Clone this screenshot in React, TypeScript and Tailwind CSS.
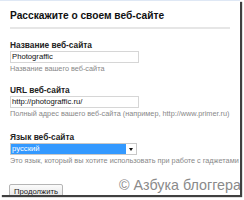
import React from 'react';

const font = { fontFamily: '"Liberation Sans", Arial, sans-serif' };

function Pole({ label, children, hint, className = '' }: { label: string; children: React.ReactNode; hint: string; className?: string }) {
  return (
    <div className={`flex flex-col ${className}`}>
      <div className="text-[8.3px] font-bold leading-[10px] text-[#222]">{label}</div>
      <div className="mt-[1px]">{children}</div>
      <div className="mt-[1px] whitespace-nowrap text-[7.3px] leading-[9px] text-[#888]">{hint}</div>
    </div>
  );
}

export default function App() {
  return (
    <div className="h-[200px] w-[244px] bg-white" style={font}>
      <div className="relative h-[195px] w-[240px] overflow-hidden border-t border-[#dfe8f5] bg-white shadow-[2px_2px_1px_rgba(0,0,0,0.75)]">
        <div className="px-[10px] pt-[8px]">
          <div className="text-[10.2px] font-bold leading-[13px] text-[#111]">Расскажите о своем веб-сайте</div>
          <div className="mt-[5px] h-[2px] bg-[#e6e6e6]" />
        </div>
        <div className="flex flex-col px-[10px] pt-[11px]">
          <Pole label="Название веб-сайта" hint="Название вашего веб-сайта">
            <div className="flex h-[12px] w-[129px] items-center border border-[#d6d6d6] px-[1px] text-[7.7px] text-[#111]">
              Photograffic
            </div>
          </Pole>
          <Pole className="mt-[12px]" label="URL веб-сайта" hint="Полный адрес вашего веб-сайта (например, http://www.primer.ru)">
            <div className="flex h-[12px] w-[129px] items-center border border-[#d6d6d6] px-[1px] text-[7.7px] text-[#111]">
              http://photograffic.ru/
            </div>
          </Pole>
          <Pole className="mt-[14px]" label="Язык веб-сайта" hint="Это язык, который вы хотите использовать при работе с гаджетами">
            <div className="flex h-[12px] w-[127px] border border-[#c8c8c8]">
              <div className="flex flex-1 items-center bg-[#3399ff] px-[1px] text-[7.7px] text-white">русский</div>
              <div className="flex w-[10px] items-center justify-center bg-white">
                <div className="h-0 w-0 border-x-[2.5px] border-t-[3px] border-x-transparent border-t-[#111]" />
              </div>
            </div>
          </Pole>
        </div>
        <div className="px-[9px] pt-[12px]">
          <div className="inline-flex h-[15px] items-center rounded-[2px] border border-[#b5b5b5] bg-gradient-to-b from-[#fbfbfb] to-[#e4e4e4] px-[4px] text-[7.7px] text-[#222]">
            Продолжить
          </div>
        </div>
        <div className="absolute left-[119px] top-[176px] whitespace-nowrap text-[14.3px] leading-[16px] text-[#8a8a8a]">
          © Азбука блоггера
        </div>
      </div>
    </div>
  );
}
